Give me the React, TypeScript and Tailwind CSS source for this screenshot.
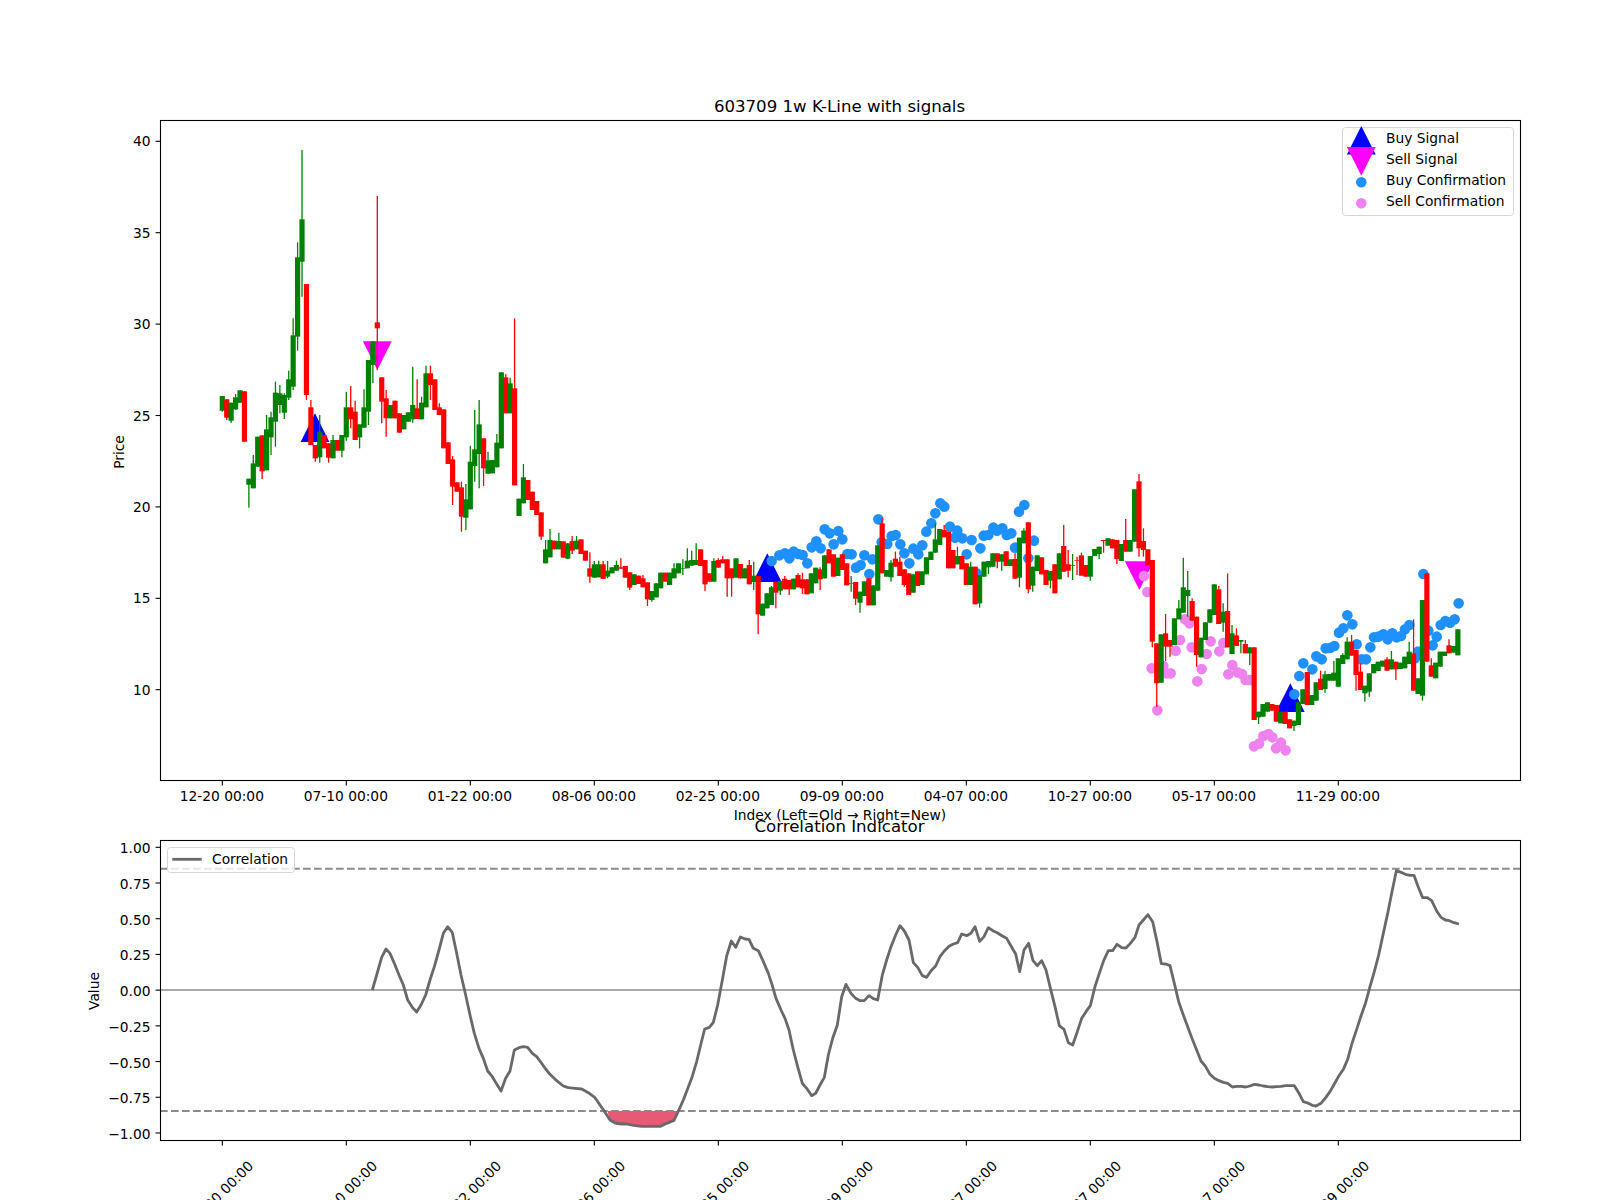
type Bar = [string, number, number, number?, number?];

// candle rows: colour, body top, body bottom, wick high, wick low (crop units, 3 per px)
const sections: { origin: number; rows: Bar[] }[] = [
  {
    origin: 380,
    rows: [
      ["g",48,92,48,95],["r",58,113,58,120],["g",68,122,68,128],["g",52,88,42,90],["g",31,68],["r",34,185],
      ["g",296,314,296,383],["g",250,325,225,325],["g",170,260],["r",166,274,166,297],["g",148,271,105,271],
      ["g",112,172,95,225],["g",38,125,5,200],["g",40,75,15,100],["g",45,98,40,117],["g",-2,53,-28,60],
      ["g",-134,20,-185,30],["g",-368,-130,-413,-88],["g",-482,-355,-690,-250],["r",-288,45,-288,60],
      ["r",82,195,60,195],["r",195,235,195,245],["g",155,232,105,248],["r",165,205],["r",190,233,190,248],
      ["g",180,235,165,235],["r",180,212],["g",165,212,165,232],["g",82,172,35,182],["r",82,118,18,145],
      ["r",95,180,62,180],["g",133,172,133,205],["g",82,143,28,143],["g",-60,95,-60,135],["g",-116,-45,-116,10],
      ["r",-173,-155,-552,-30],["r",-8,65,-8,130],["r",55,115,30,170],["g",75,115],["r",62,115],["r",100,158],
      ["g",105,148],["g",97,125],["g",75,118,-40,128],["r",85,117,-2,117],["g",68,118,50,118],["g",-20,82,-43,82],
      ["r",-20,15,-43,60],["r",-2,90],["r",82,105,70,105],["r",88,205],["r",187,252],["r",238,320,228,375],
      ["r",307,335],["r",322,410,305,455],["g",358,413,312,450],["g",245,388,197,388],["g",208,258,90,305],
      ["g",133,222,60,325],["r",175,265,175,318],["g",241,281,215,281],["g",240,280],["g",188,262,162,262],
      ["g",-23,205],["r",-8,100,-18,100],["g",10,100,-7,100],["r",25,316,-185,316],["g",356,408],["g",292,370,252,370],
      ["r",300,360],["r",335,390],["r",363,405],["r",397,470,397,480],["g",508,550,480,550],
    ],
  },
  {
    origin: 480,
    rows: [
      ["g",180,232,147,232],["r",182,208],["g",183,208,158,208],["r",184,233],["g",190,236],["r",183,212,168,222],
      ["g",182,208,168,208],["r",178,222],["r",212,242],["r",265,290,217,308],["g",253,293,243,293],["g",253,292,242,292],
      ["r",253,297,243,297],["g",272,290,243,295],["g",262,280],["g",255,272,242,272],["r",262,266,235,266],["r",258,293],
      ["r",277,323,277,330],["g",283,315],["r",287,312],["r",295,322,285,322],["r",307,358,307,378],["g",333,360,333,365],
      ["g",310,352],["g",278,325],["r",278,305],["g",278,315],["g",265,295,250,295],["g",250,280],["g",265,267,238,285],
      ["g",242,265,205,265],["g",240,257,212,257],["g",240,255,190,255],["r",208,258],["r",240,313,240,333],["r",280,305],
      ["g",243,305,235,305],["r",240,263,235,263],["r",238,250,228,250],["r",238,295,238,350],["r",265,295,265,350],
      ["g",235,293],["r",252,295],["g",265,295],["r",255,313,240,313],["g",287,306,245,330],["r",288,403,288,462],
      ["g",371,407],["g",340,385],["g",322,375,318,375],["r",306,338,306,385],["g",303,332,303,345],["r",296,328,288,328],
      ["r",300,328,300,345],["g",296,328],["r",285,322,280,322],["r",298,325,278,342],["r",298,343],["g",280,340],
      ["g",263,310],["r",268,298,262,330],["g",226,295],["r",208,250],["r",223,290],["g",233,288],["r",223,270],["r",250,316],
      ["g",310,312,288,335],["r",306,356,306,375],["g",335,368,335,398],["g",304,348],["r",295,376],["g",316,376],
      ["g",196,332],["r",130,280,113,280],["g",270,290],["g",248,292,240,305],["r",236,260,215,260],["r",245,288,230,288],
      ["r",268,315,268,320],["r",280,345],["g",283,338],["r",274,318],["g",274,315],["g",232,283],["g",215,240],
      ["g",178,218,130,218],["g",147,195],["r",150,172,135,172],
    ],
  },
  {
    origin: 460,
    rows: [
      ["r",215,325],["r",270,325],["g",288,313,260,313],["r",288,328],["r",310,375],["g",320,375,305,375],["r",320,433],
      ["g",345,430,345,443],["g",305,350],["g",303,322,303,342],["g",280,320],["r",280,305,280,325],["g",283,305,283,332],
      ["r",274,318],["g",298,318],["r",297,356,280,356],["g",233,353,233,382],["g",212,250,205,250],["r",187,388,187,400],
      ["g",320,377,320,395],["g",286,333],["r",292,343],["r",330,375],["g",333,362,333,385],["r",313,400],["g",280,358],
      ["r",258,335,195,335],["r",313,332,270,352],["g",315,317,282,360],["r",300,302,290,345],["r",286,347,278,347],
      ["r",315,350],["g",288,350,288,362],["g",267,288],["g",260,282,260,297],["r",240,243,240,278],["g",235,257],
      ["r",238,265],["r",240,297,240,312],["g",252,303],["r",240,275,177,275],["g",240,275],["g",88,245],["r",64,265,42,290],
      ["r",243,270,205,290],["r",268,316],["r",300,545,300,562],["r",550,670,550,740],["g",523,668],["r",520,560,462,603],
      ["r",540,560,540,590],["g",475,555],["g",445,478,420,478],["g",382,458,293,458],["g",390,408,333,470],["r",423,482,415,482],
      ["r",470,585,470,620],
    ],
  },
  {
    origin: 540,
    rows: [
      ["g",293,352],["g",247,300],["g",208,248],["g",133,225],["r",148,252,138,252],["g",215,248,190,275],["r",213,322,100,322],
      ["g",280,342,255,342],["r",286,318,265,318],["g",300,305,300,340],["r",312,340,300,340],["g",322,340,322,375],["r",322,540],
      ["g",515,532,515,552],["g",492,530],["g",487,515],["r",492,512],["r",495,545],["g",515,550],["r",515,552],["r",538,565],
      ["g",542,558,542,573],["g",487,555],["g",448,492],["r",396,495],["g",465,495],["g",427,482],["r",416,450,392,450],
      ["g",403,447,393,458],["g",402,422],["g",398,422,363,422],["g",355,440],["g",345,372,340,372],["g",305,358,292,358],
      ["r",305,347,285,347],["r",330,405,330,452],["r",395,450,370,450],["g",437,460,437,485],["g",400,455,400,470],
      ["g",372,400],["g",365,393],["g",362,380],["r",358,392,352,392],["g",358,388,333,388],["r",365,388,365,420],
      ["g",368,387],["g",350,385],["g",335,372,305,372],["r",340,452,238,452],["g",415,462],["g",180,467,180,482],
      ["r",100,365],["r",376,410,355,410],["g",368,415],["g",335,380],["g",335,348],["r",316,340,298,340],["g",318,338],["g",268,346],
    ],
  },
];

const barStep = 124 / 28;
const bars = sections.flatMap((s) =>
  s.rows.map((r) => ({
    color: r[0] === "g" ? "#008000" : "#ff0000",
    top: s.origin + r[1] / 3,
    bottom: s.origin + r[2] / 3,
    high: s.origin + (r[3] ?? r[1]) / 3,
    low: s.origin + (r[4] ?? r[2]) / 3,
  }))
);

const toPoints = (ox: number, oy: number, pts: number[][]) =>
  pts.map(([x, y]) => [ox + x / 3, oy + y / 3]);

const buyDots = [
  ...toPoints(550, 480, [[665,243],[688,226],[705,220],[718,235],[731,215],[745,222],[758,225],[772,250],[785,202],[799,184],[812,205],[824,148],[839,160],[851,193],[865,153],[877,178],[892,222],[905,223],[918,263],[932,255],[943,226],[958,282],[967,238],[985,118],[995,187],[1012,192],[1025,168],[1037,165],[1051,193],[1063,220],[1078,250],[1090,206],[1105,223],[1117,196],[1129,155],[1144,130],[1156,100],[1171,70],[1183,80]]),
  ...toPoints(950, 460, [[0,200],[22,212],[15,233],[37,235],[65,240],[50,283],[91,265],[101,227],[115,225],[130,203],[141,212],[157,205],[170,225],[184,220],[195,263],[207,155],[223,135],[235,295],[252,242],[80,340]]),
  ...toPoints(1200, 540, [[283,463],[298,408],[310,370],[337,388],[349,349],[365,358],[377,325],[390,324],[403,318],[417,278],[430,265],[442,226],[457,253],[470,313],[484,358],[498,358],[511,322],[522,292],[535,290],[550,283],[563,298],[577,280],[590,292],[603,288],[615,268],[628,255],[645,355],[654,335],[670,102],[685,272],[698,316],[710,290],[722,255],[736,243],[750,248],[764,238],[776,190]]),
];

const sellDots = [
  ...toPoints(950, 460, [[582,348],[592,396],[605,625],[640,618],[650,640],[662,640],[622,751],[690,540],[705,478],[718,490],[677,572],[725,562],[755,627],[742,664],[770,582],[782,544],[808,574],[820,549],[847,615],[835,643],[862,637],[876,642],[887,660],[900,660]]),
  ...toPoints(1200, 540, [[150,420],[162,619],[177,611],[190,588],[205,582],[217,592],[228,625],[243,608],[257,631]]),
];

const corr = [
  ...toPoints(60, 770, [[937,660],[950,615],[965,562],[978,537],[990,550],[1003,580],[1017,615],[1030,645],[1043,690],[1057,712],[1070,726],[1083,705],[1097,675],[1110,630],[1123,590],[1137,540],[1150,490],[1163,470],[1177,488],[1190,550],[1203,615],[1217,675],[1230,735],[1243,790],[1257,835],[1270,865],[1283,903],[1297,920],[1310,942],[1323,963],[1337,925],[1350,903],[1363,840],[1377,833],[1390,830],[1403,832],[1417,850],[1430,860],[1443,877],[1457,897]]),
  ...toPoints(550, 830, [[0,733],[20,752],[40,768],[55,773],[75,775],[95,777],[115,788],[135,803],[150,825],[165,847],[180,870],[195,879],[215,882],[230,882],[250,886],[275,889],[305,889],[332,889],[350,880],[372,871],[383,848],[400,810],[425,745],[440,695],[452,645],[464,597],[478,592],[490,577],[503,525],[517,450],[530,378],[544,333],[557,352],[571,321],[585,327],[597,328],[610,355],[625,362],[640,395],[655,430],[665,460],[678,505],[693,540],[705,565],[717,600],[730,660],[743,710],[757,760],[770,775],[785,797],[797,790],[810,765],[823,742],[835,675],[848,625],[862,585],[875,500],[888,463],[903,490],[917,505],[930,512],[943,512],[957,497],[970,506],[983,510],[997,435],[1010,390],[1023,350],[1037,315],[1050,287],[1063,303],[1077,330],[1090,398],[1103,412],[1117,437],[1130,442],[1143,422],[1157,408],[1170,380],[1183,363],[1197,349],[1210,342],[1223,338],[1235,312],[1250,317],[1263,310],[1275,290],[1289,334],[1302,320],[1315,293],[1330,303],[1343,309],[1357,318],[1370,325],[1383,348],[1397,372],[1409,425],[1422,360],[1436,340],[1449,392],[1462,407]]),
  ...toPoints(1040, 830, [[5,392],[18,420],[30,470],[45,530],[58,587],[72,598],[85,638],[98,645],[112,605],[125,565],[138,545],[151,527],[165,470],[178,430],[191,392],[205,362],[218,362],[231,343],[245,353],[258,354],[271,340],[285,322],[297,285],[310,270],[324,254],[338,275],[351,335],[364,401],[377,402],[390,407],[403,460],[416,515],[430,555],[443,590],[457,628],[470,660],[483,693],[497,710],[510,733],[523,745],[537,752],[550,757],[563,760],[577,771],[590,769],[603,769],[617,771],[630,768],[643,763],[657,765],[670,768],[683,770],[697,771],[710,770],[723,769],[737,767],[750,767],[763,767],[777,790],[790,815],[803,819],[817,826],[828,828],[843,820],[857,803],[870,785],[883,762],[897,737],[910,718],[923,688],[936,640],[950,598],[963,558],[977,518],[990,470],[1003,425],[1016,375],[1030,310],[1043,250],[1056,185],[1069,122],[1083,127],[1096,133],[1110,136],[1122,136],[1135,172],[1148,203],[1162,203],[1175,212],[1190,243],[1203,262],[1216,270],[1228,272],[1242,278],[1257,282]]),
];

const dip = toPoints(550, 830, [[172,843],[180,870],[195,879],[215,882],[230,882],[250,886],[275,889],[305,889],[332,889],[350,880],[372,871],[383,843]]);

const line = (pts: number[][]) => pts.map((p) => p.join(",")).join(" ");

const tickLabels = ["12-20 00:00", "07-10 00:00", "01-22 00:00", "08-06 00:00", "02-25 00:00", "09-09 00:00", "04-07 00:00", "10-27 00:00", "05-17 00:00", "11-29 00:00"];
const tickX = tickLabels.map((_, i) => 222.3 + i * 124);
const priceTicks = [40, 35, 30, 25, 20, 15, 10];
const valueTicks = ["1.00", "0.75", "0.50", "0.25", "0.00", "−0.25", "−0.50", "−0.75", "−1.00"];

const up = (x: number, apex: number) => `${x - 14.4},${apex + 28.6} ${x + 14.4},${apex + 28.6} ${x},${apex}`;
const down = (x: number, apex: number) => `${x - 14.4},${apex - 28.8} ${x + 14.4},${apex - 28.8} ${x},${apex}`;

function PriceChart() {
  return (
    <svg viewBox="0 0 1600 820" className="w-[1600px] h-[820px] overflow-visible">
      <text x="839.5" y="112" textAnchor="middle" className="text-[16.6px]">603709 1w K-Line with signals</text>

      <polygon points={up(315, 413.3)} fill="#0000ff" />
      <polygon points={up(767.3, 553.3)} fill="#0000ff" />
      <polygon points={up(1290.3, 683.3)} fill="#0000ff" />
      <polygon points={down(377.3, 370)} fill="#ff00ff" />
      <polygon points={down(1139.3, 590)} fill="#ff00ff" />

      {buyDots.map(([x, y], i) => <circle key={i} cx={x} cy={y} r="5.3" fill="#1e90ff" />)}
      {sellDots.map(([x, y], i) => <circle key={i} cx={x} cy={y} r="5.3" fill="#ee82ee" />)}

      {bars.map((b, i) => {
        const x = 222.3 + i * barStep;
        return (
          <g key={i} fill={b.color} stroke={b.color}>
            <line x1={x} x2={x} y1={b.high} y2={b.low} strokeWidth="1.3" />
            <rect x={x - 2.6} y={b.top} width="5.2" height={Math.max(b.bottom - b.top, 0)} stroke="none" />
          </g>
        );
      })}

      <rect x="160.5" y="120.5" width="1360" height="660" fill="none" stroke="#000" strokeWidth="1.1" />

      {priceTicks.map((p) => {
        const y = 141.3 + (40 - p) * 18.28;
        return (
          <g key={p}>
            <line x1="155.6" x2="160" y1={y} y2={y} stroke="#000" strokeWidth="1.1" />
            <text x="150.5" y={y + 5} textAnchor="end" className="text-[13.8px]">{p}</text>
          </g>
        );
      })}
      {tickLabels.map((t, i) => (
        <g key={t}>
          <line x1={tickX[i]} x2={tickX[i]} y1="781" y2="785.4" stroke="#000" strokeWidth="1.1" />
          <text x={tickX[i] - 0.5} y="801" textAnchor="middle" className="text-[13.8px]">{t}</text>
        </g>
      ))}
      <text x="840" y="820" textAnchor="middle" className="text-[13.8px]">Index (Left=Old → Right=New)</text>
      <text x="124" y="452" textAnchor="middle" transform="rotate(-90 124 452)" className="text-[13.8px]">Price</text>

      <rect x="1342.5" y="127.5" width="171" height="88" rx="3" fill="#fff" fillOpacity="0.8" stroke="#d6d6d6" />
      <polygon points={up(1361.3, 126)} fill="#0000ff" />
      <polygon points={down(1361.3, 175.7)} fill="#ff00ff" />
      <circle cx="1361.3" cy="182.3" r="5.3" fill="#1e90ff" />
      <circle cx="1361.3" cy="203.3" r="5.3" fill="#ee82ee" />
      {["Buy Signal", "Sell Signal", "Buy Confirmation", "Sell Confirmation"].map((t, i) => (
        <text key={t} x="1386" y={143 + i * 21} className="text-[13.8px]">{t}</text>
      ))}
    </svg>
  );
}

function CorrelationChart() {
  return (
    <svg viewBox="0 820 1600 380" className="w-[1600px] h-[380px] overflow-visible">
      <text x="839.5" y="832" textAnchor="middle" className="text-[16.6px]">Correlation Indicator</text>

      <line x1="160" x2="1520" y1="990" y2="990" stroke="#aaaaaa" strokeWidth="2" />
      <line x1="160" x2="1520" y1="868.8" y2="868.8" stroke="#8c8c8c" strokeWidth="2.1" strokeDasharray="7.7 3.3" />
      <line x1="160" x2="1520" y1="1111" y2="1111" stroke="#8c8c8c" strokeWidth="2.1" strokeDasharray="7.7 3.3" />
      <polygon points={line(dip)} fill="#e75a76" />
      <polyline points={line(corr)} fill="none" stroke="#696969" strokeWidth="2.8" strokeLinejoin="round" />

      <rect x="160.5" y="840.5" width="1360" height="300" fill="none" stroke="#000" strokeWidth="1.1" />

      {valueTicks.map((v, i) => {
        const y = 847.3 + i * 35.71;
        return (
          <g key={v}>
            <line x1="155.6" x2="160" y1={y} y2={y} stroke="#000" strokeWidth="1.1" />
            <text x="150.5" y={y + 6} textAnchor="end" className="text-[13.8px]">{v}</text>
          </g>
        );
      })}
      {tickLabels.map((t, i) => (
        <g key={t}>
          <line x1={tickX[i]} x2={tickX[i]} y1="1141" y2="1145.4" stroke="#000" strokeWidth="1.1" />
          <text x={tickX[i] - 1.5} y="1198" textAnchor="middle" transform={`rotate(-45 ${tickX[i] - 1.5} 1193)`} className="text-[13.8px]">{t}</text>
        </g>
      ))}
      <text x="99" y="991" textAnchor="middle" transform="rotate(-90 99 991)" className="text-[13.8px]">Value</text>

      <rect x="167.5" y="847.5" width="127" height="25" rx="3" fill="#fff" fillOpacity="0.8" stroke="#d6d6d6" />
      <line x1="172.3" x2="201.7" y1="859.3" y2="859.3" stroke="#696969" strokeWidth="2.8" />
      <text x="212" y="864" className="text-[13.8px]">Correlation</text>
    </svg>
  );
}

export default function App() {
  return (
    <div className="flex flex-col w-[1600px] h-[1200px] overflow-hidden bg-white font-['DejaVu_Sans',sans-serif] text-black">
      <PriceChart />
      <CorrelationChart />
    </div>
  );
}
